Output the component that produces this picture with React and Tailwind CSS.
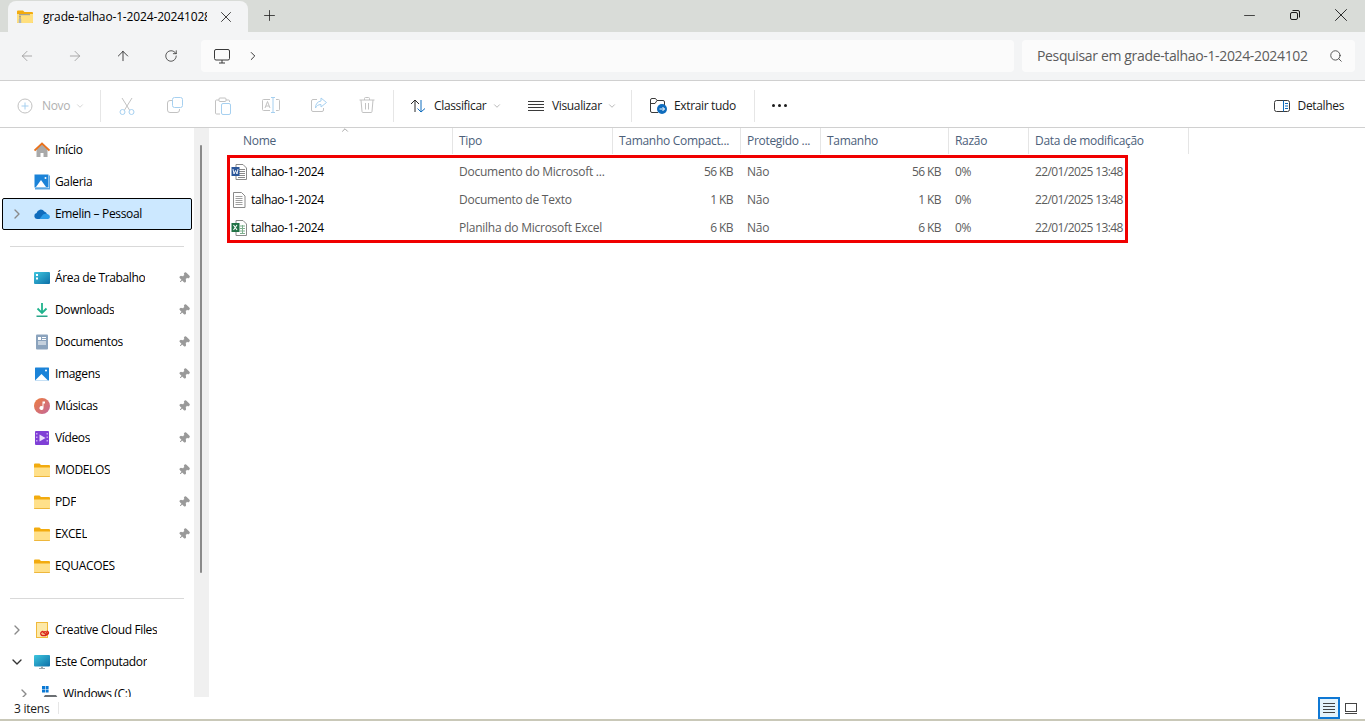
import { ChevronRight, ChevronDown, ChevronUp, Plus, X, Minus, Search, Pin, ArrowLeft, ArrowRight, ArrowUp, RotateCw } from "lucide-react";

/* ---------- drawn icons ---------- */
function FolderIcon() {
  return (
    <svg width="16" height="16" viewBox="0 0 16 16" className="shrink-0">
      <path d="M0 2.500 a1 1 0 0 1 1-1h4.500l1.500 1.500h8a1 1 0 0 1 1 1v9.500a1 1 0 0 1-1 1H1a1 1 0 0 1-1-1z" fill="#f2ab0f" />
      <path d="M0 5.500 h16 v8.500 a1 1 0 0 1-1 1H1 a1 1 0 0 1-1-1z" fill="#ffe08a" />
      <path d="M0 14 h16 v.2 a.9.9 0 0 1-.9.8H.9a.9.9 0 0 1-.9-.8z" fill="#eeb73c" />
    </svg>
  );
}

function HomeIcon() {
  return (
    <svg width="16" height="16" viewBox="0 0 16 16" className="shrink-0">
      <path d="M2.500 7.500 8 2.500l5.500 5V15H9.500v-4h-3v4h-4z" fill="#a9a9a9" />
      <path d="M.5 8.500 8 1.500l7.500 7" fill="none" stroke="#e8711c" strokeWidth="1.900" />
    </svg>
  );
}

function GalleryIcon() {
  return (
    <svg width="16" height="16" viewBox="0 0 16 16" className="shrink-0">
      <rect x="0.500" y="0.500" width="14" height="13" fill="#1b83d8" />
      <path d="M2 13 7 6l5 7z" fill="#fff" />
      <circle cx="11.500" cy="4" r="1" fill="#fff" />
      <path d="M1 14h14V1.500h1V15.500H1z" fill="#5aa7e3" />
    </svg>
  );
}

function CloudIcon() {
  return (
    <svg width="16" height="16" viewBox="0 0 16 16" className="shrink-0">
      <path d="M3 13a3 3 0 0 1-.4-5.900A4.200 4.200 0 0 1 10.300 5.500 3.600 3.600 0 0 1 13 8.200 2.500 2.500 0 0 1 13.500 13z" fill="#0f6cbd" />
      <path d="M5.500 13 9 8.500c1.500-.8 3-.8 4-.3 1.700.1 2.900 1.300 2.900 2.500 0 1.300-1 2.300-2.400 2.300z" fill="#2b9be8" />
    </svg>
  );
}

function DesktopIcon() {
  return (
    <svg width="16" height="16" viewBox="0 0 16 16" className="shrink-0">
      <defs>
        <linearGradient id="desk" x1="0" y1="0" x2="1" y2="1">
          <stop offset="0" stopColor="#3fc6de" />
          <stop offset="1" stopColor="#0c6fa8" />
        </linearGradient>
      </defs>
      <rect x="0" y="2" width="16" height="12" rx="1" fill="url(#desk)" />
      <rect x="2" y="4" width="2" height="2" fill="#fff" />
      <rect x="2" y="7.500" width="2" height="2" fill="#fff" />
    </svg>
  );
}

function DownloadIcon() {
  return (
    <svg width="16" height="16" viewBox="0 0 16 16" className="shrink-0">
      <path d="M8 1v9M3.500 6.500 8 11l4.500-4.500" fill="none" stroke="#20b38d" strokeWidth="1.800" />
      <rect x="2.500" y="13.500" width="11" height="1.500" fill="#2aa58a" />
    </svg>
  );
}

function DocsIcon() {
  return (
    <svg width="16" height="16" viewBox="0 0 16 16" className="shrink-0">
      <rect x="2" y="0.500" width="12" height="15" rx="1" fill="#8ba3bd" />
      <path d="M4 3h3v3H4zM8 3h4v1H8zM8 5h4v1H8zM4 7.500h8v1H4zM4 9.500h8v1H4z" fill="#fff" />
    </svg>
  );
}

function PicturesIcon() {
  return (
    <svg width="16" height="16" viewBox="0 0 16 16" className="shrink-0">
      <rect x="1" y="1.500" width="14" height="13" rx="0.500" fill="#1b83d8" />
      <path d="M1 14.500 7.500 8l6.500 6.500z" fill="#fff" />
      <circle cx="12" cy="4.500" r="1" fill="#fff" />
    </svg>
  );
}

function MusicIcon() {
  return (
    <svg width="16" height="16" viewBox="0 0 16 16" className="shrink-0">
      <defs>
        <linearGradient id="mus" x1="0" y1="0" x2="1" y2="1">
          <stop offset="0" stopColor="#ee7d3b" />
          <stop offset="1" stopColor="#c3679c" />
        </linearGradient>
      </defs>
      <circle cx="8" cy="8" r="8" fill="url(#mus)" />
      <path d="M8.500 3.500h2.500v2H9.500V10a2 2 0 1 1-1-1.700z" fill="#fff" />
    </svg>
  );
}

function VideoIcon() {
  return (
    <svg width="16" height="16" viewBox="0 0 16 16" className="shrink-0">
      <rect x="1" y="1" width="14" height="14" rx="1" fill="#7f3fd6" />
      <path d="M5.500 4.500v7l6-3.500z" fill="#e8ddfa" />
      <path d="M2 3h1.500v1.500H2zM2 6.500h1.500V8H2zM2 10h1.500v1.500H2zM12.500 3H14v1.500h-1.500zM12.500 6.500H14V8h-1.500zM12.500 10H14v1.500h-1.500z" fill="#c9a8f2" />
    </svg>
  );
}

function CreativeCloudIcon() {
  return (
    <svg width="16" height="16" viewBox="0 0 16 16" className="shrink-0">
      <rect x="2.500" y="0.500" width="11" height="15" fill="#fde9a8" stroke="#f0b93a" />
      <path d="M7 11.500a2 2 0 1 1 2.500 2h-3a2 2 0 1 1 .5-4l2.500 2.500a1.700 1.700 0 1 0 1.200-2.800" fill="none" stroke="#d9241b" strokeWidth="1.300" transform="translate(2 0)" />
    </svg>
  );
}

function ComputerIcon() {
  return (
    <svg width="16" height="16" viewBox="0 0 16 16" className="shrink-0">
      <defs>
        <linearGradient id="cmp" x1="0" y1="0" x2="1" y2="1">
          <stop offset="0" stopColor="#3fc6de" />
          <stop offset="1" stopColor="#0c6fa8" />
        </linearGradient>
      </defs>
      <rect x="0" y="1" width="16" height="11.500" rx="1" fill="url(#cmp)" />
      <path d="M7 12.500h2V14h2v1H5v-1h2z" fill="#9aa4ab" />
    </svg>
  );
}

function DriveIcon() {
  return (
    <svg width="16" height="16" viewBox="0 0 16 16" className="shrink-0">
      <path d="M0 0h3v3H0zM3.600 0h3v3h-3zM0 3.600h3v3H0zM3.600 3.600h3v3h-3z" fill="#0a78d4" />
      <path d="M3 9h11l2 3v3H1v-3z" fill="#6b6f73" />
      <rect x="3" y="12.500" width="2" height="1" fill="#5ee05e" />
    </svg>
  );
}

function ZipFolderIcon() {
  return (
    <svg width="16" height="16" viewBox="0 0 16 16" className="shrink-0">
      <path d="M0 2.500a1 1 0 0 1 1-1h5L7.500 3H15a1 1 0 0 1 1 1v9a1 1 0 0 1-1 1H1a1 1 0 0 1-1-1z" fill="#f2ab0f" />
      <path d="M0 5h16v8a1 1 0 0 1-1 1H1a1 1 0 0 1-1-1z" fill="#ffdf7d" />
      <path d="M2 5h11v1.200H2z" fill="#a3a39a" />
      <path d="M2 6.800h2v1H2zM2 8.600h2v1H2z" fill="#8e8e86" />
      <rect x="1.800" y="10" width="2.400" height="4" fill="#a9b4bb" />
    </svg>
  );
}

function WordFile() {
  return (
    <svg width="16" height="16" viewBox="0 0 16 16" className="shrink-0">
      <path d="M5 .5h7l3.500 3.500v11.500H5z" fill="#fff" stroke="#8a8a8a" />
      <path d="M7 5.500h7M7 7.500h7M7 9.500h7M7 11.500h7M7 13.500h7" stroke="#8a8a8a" />
      <rect x="0.500" y="3" width="8" height="9" fill="#2b579a" />
      <path d="M2 5l1 5 1.500-3.500L6 10l1-5" fill="none" stroke="#fff" strokeWidth="0.900" />
    </svg>
  );
}

function TextFile() {
  return (
    <svg width="16" height="16" viewBox="0 0 16 16" className="shrink-0">
      <path d="M2.500.5h8l3.500 3.500v11.500H2.500z" fill="#fff" stroke="#8a8a8a" />
      <path d="M4.500 4.500h7M4.500 6.500h7M4.500 8.500h7M4.500 10.500h7M4.500 12.500h7" stroke="#a0a0a0" />
    </svg>
  );
}

function ExcelFile() {
  return (
    <svg width="16" height="16" viewBox="0 0 16 16" className="shrink-0">
      <path d="M5 .5h7l3.500 3.500v11.500H5z" fill="#fff" stroke="#8a8a8a" />
      <path d="M9 6h5M9 8.500h5M9 11h5M9 13.500h5M11.500 5v9" stroke="#7fb08f" />
      <rect x="0.500" y="3" width="8" height="9" fill="#217346" />
      <path d="M2.500 5l3.500 5M6 5l-3.500 5" fill="none" stroke="#fff" strokeWidth="1.100" />
    </svg>
  );
}

/* ---------- toolbar glyphs, thin strokes ---------- */
const BLUE = "#a6d0f0";
const GREY = "#c2c2c2";

function NewIcon() {
  return (
    <svg width="16" height="16" viewBox="0 0 16 16" fill="none" className="shrink-0">
      <circle cx="8" cy="8" r="7" stroke={GREY} />
      <path d="M8 4.500v7M4.500 8h7" stroke={BLUE} />
    </svg>
  );
}

function CutIcon() {
  return (
    <svg width="16" height="18" viewBox="0 0 16 18" fill="none">
      <path d="M3 1l7.500 12M13 1L5.500 13" stroke={GREY} />
      <circle cx="3.500" cy="15" r="2.500" stroke={BLUE} />
      <circle cx="12.500" cy="15" r="2.500" stroke={BLUE} />
    </svg>
  );
}

function CopyIcon() {
  return (
    <svg width="16" height="16" viewBox="0 0 16 16" fill="none">
      <rect x="5.500" y="0.500" width="10" height="10" rx="2" stroke={BLUE} />
      <path d="M5 3.500H3a2.500 2.500 0 0 0-2.500 2.500v7A2.500 2.500 0 0 0 3 15.500h7a2.500 2.500 0 0 0 2.500-2.500v-1" stroke={GREY} />
    </svg>
  );
}

function PasteIcon() {
  return (
    <svg width="16" height="18" viewBox="0 0 16 18" fill="none">
      <path d="M4 3H1.500a1 1 0 0 0-1 1v12a1 1 0 0 0 1 1H5M11 3h2.500a1 1 0 0 1 1 1v1" stroke={GREY} />
      <rect x="4" y="1" width="7" height="3.500" rx="1" stroke={GREY} />
      <rect x="6.500" y="6.500" width="9" height="11" rx="1.500" stroke={BLUE} />
    </svg>
  );
}

function RenameIcon() {
  return (
    <svg width="18" height="16" viewBox="0 0 18 16" fill="none">
      <path d="M8 2.500H1.500a1 1 0 0 0-1 1v9a1 1 0 0 0 1 1H8M14 2.500h2.500a1 1 0 0 1 1 1v9a1 1 0 0 1-1 1H14" stroke={GREY} />
      <path d="M11 .5v15M9 .5h4M9 15.500h4" stroke={BLUE} />
      <path d="M3 11l2.500-6.500L8 11M4 9h3" stroke={GREY} />
    </svg>
  );
}

function ShareIcon() {
  return (
    <svg width="16" height="16" viewBox="0 0 16 16" fill="none">
      <path d="M6 2.500H2a1.500 1.500 0 0 0-1.500 1.500v9A1.500 1.500 0 0 0 2 14.500h9a1.500 1.500 0 0 0 1.500-1.500v-2" stroke={GREY} />
      <path d="M10 1l5.500 4.500L10 10V7.500C7 7.500 5.500 9 4.500 11c0-4 2-6.500 5.500-7z" stroke={BLUE} />
    </svg>
  );
}

function TrashIcon() {
  return (
    <svg width="16" height="16" viewBox="0 0 16 16" fill="none">
      <path d="M.5 3h15M5.500 3V1.500a1 1 0 0 1 1-1h3a1 1 0 0 1 1 1V3M2 3l1 11.500a1 1 0 0 0 1 1h8a1 1 0 0 0 1-1L14 3M6.500 6v6.500M9.500 6v6.500" stroke={GREY} />
    </svg>
  );
}

function SortIcon() {
  return (
    <svg width="16" height="16" viewBox="0 0 16 16" fill="none" className="shrink-0">
      <path d="M5 14V2M1 6l4-4 4 4" stroke="#2b2b2b" />
      <path d="M11 2v12M7.500 10.500 11 14l4-3.500" stroke="#0f6cbd" />
    </svg>
  );
}

function ViewIcon() {
  return (
    <svg width="16" height="16" viewBox="0 0 16 16" fill="none" className="shrink-0">
      <path d="M0 3.500h16M0 6.500h16M0 9.500h16M0 12.500h16" stroke="#3a3a3a" />
    </svg>
  );
}

function ExtractIcon() {
  return (
    <svg width="17" height="16" viewBox="0 0 17 16" fill="none" className="shrink-0">
      <path d="M8 14.500H2a1.500 1.500 0 0 1-1.500-1.500V2A1.500 1.500 0 0 1 2 .5h3.500L7 2.500h6A1.500 1.500 0 0 1 14.500 4v3M.5 5.500H5l2-3" stroke="#3a3a3a" />
      <circle cx="12" cy="11" r="5" fill="#0f6cbd" />
      <path d="M9.500 11h5M12.500 9l2 2-2 2" stroke="#fff" />
    </svg>
  );
}

function DetailsIcon() {
  return (
    <svg width="16" height="14" viewBox="0 0 16 14" fill="none" className="shrink-0">
      <rect x="0.500" y="1.500" width="15" height="11" rx="2" stroke="#3a3a3a" />
      <path d="M9.500 1.500v11" stroke="#0f6cbd" />
      <path d="M11 4.500h3M11 7h3M11 9.500h3" stroke="#0f6cbd" />
    </svg>
  );
}

function MonitorIcon() {
  return (
    <svg width="16" height="16" viewBox="0 0 16 16" fill="none" className="shrink-0">
      <rect x="0.500" y="1.500" width="15" height="10.500" rx="1.500" stroke="#3a3a3a" />
      <path d="M8 12v3M5 15h6" stroke="#3a3a3a" />
    </svg>
  );
}

function RestoreIcon() {
  return (
    <svg width="10" height="10" viewBox="0 0 10 10" fill="none">
      <rect x="0.500" y="2.500" width="7" height="7" rx="1.500" stroke="#1b1b1b" />
      <path d="M2.500 .5H8a1.500 1.500 0 0 1 1.500 1.500v5.500" stroke="#1b1b1b" />
    </svg>
  );
}

const PLACES = [
  { label: "Área de Trabalho", Icon: DesktopIcon, pin: true },
  { label: "Downloads", Icon: DownloadIcon, pin: true },
  { label: "Documentos", Icon: DocsIcon, pin: true },
  { label: "Imagens", Icon: PicturesIcon, pin: true },
  { label: "Músicas", Icon: MusicIcon, pin: true },
  { label: "Vídeos", Icon: VideoIcon, pin: true },
  { label: "MODELOS", Icon: FolderIcon, pin: true },
  { label: "PDF", Icon: FolderIcon, pin: true },
  { label: "EXCEL", Icon: FolderIcon, pin: true },
  { label: "EQUACOES", Icon: FolderIcon },
];

const FILES = [
  { Icon: WordFile, type: "Documento do Microsoft ...", packed: "56 KB", size: "56 KB" },
  { Icon: TextFile, type: "Documento de Texto", packed: "1 KB", size: "1 KB" },
  { Icon: ExcelFile, type: "Planilha do Microsoft Excel", packed: "6 KB", size: "6 KB" },
];

const HEADERS = [
  { label: "Tipo", width: "w-[160px]" },
  { label: "Tamanho Compact...", width: "w-[128px]" },
  { label: "Protegido ...", width: "w-[80px]" },
  { label: "Tamanho", width: "w-[128px]" },
  { label: "Razão", width: "w-[80px]" },
  { label: "Data de modificação", width: "w-[160px]" },
];

function SideRow({ label, Icon, pin, arrow, selected, indent }) {
  return (
    <div
      className={`mx-[2px] flex h-[32px] items-center ${
        selected ? "rounded-[2px] border border-black bg-[#cce8ff]" : ""
      }`}
    >
      <span className={`flex w-[30px] shrink-0 items-center text-[#8a8a8a] ${indent ? "pl-[14px]" : selected ? "pl-[6px]" : "pl-[7px]"}`}>
        {arrow === "right" && <ChevronRight size={16} strokeWidth={2} />}
        {arrow === "down" && <ChevronDown size={16} strokeWidth={2} className="text-[#333]" />}
      </span>
      <span className={indent ? "ml-[10px]" : selected ? "ml-[1px]" : "ml-[2px]"}>
        <Icon />
      </span>
      <span className="ml-[5px] truncate text-black">{label}</span>
      {pin && <Pin size={12} strokeWidth={2} fill="#9a9a9a" className="ml-auto mr-[2px] rotate-45 text-[#9a9a9a]" />}
    </div>
  );
}

function Separator() {
  return <span className="h-[32px] w-px shrink-0 bg-[#e6e6e6]" />;
}

export default function App() {
  return (
    <div className="relative flex h-screen w-screen flex-col overflow-hidden bg-white font-['Open_Sans',sans-serif] text-[12px] tracking-[-0.25px] text-[#1b1b1b]">
      {/* title bar */}
      <div className="flex h-[32px] shrink-0 bg-[#d9dcd8] pt-px">
        <div className="ml-[8px] flex w-[240px] items-center rounded-t-[8px] bg-[#f3f4f5] pl-[9px]">
          <ZipFolderIcon />
          <span className="ml-[10px] w-[164px] overflow-hidden whitespace-nowrap tracking-[-0.15px] text-black">grade-talhao-1-2024-20241028</span>
          <X size={18} strokeWidth={1.1} className="ml-[10px]" />
        </div>
        <Plus size={17} strokeWidth={1.1} className="ml-[13px] mt-[6px]" />
        <div className="ml-auto flex items-center pb-[3px]">
          <Minus size={17} strokeWidth={1.1} className="mr-[32px]" />
          <RestoreIcon />
          <X size={22} strokeWidth={1} className="ml-[30px] mr-[13px]" />
        </div>
      </div>

      {/* address bar */}
      <div className="flex h-[49px] shrink-0 items-center border-b border-[#d0d0d0] bg-[#f3f4f5] pb-px pl-[19px]">
        <ArrowLeft size={16} strokeWidth={1.25} className="text-[#9a9a9a]" />
        <ArrowRight size={16} strokeWidth={1.25} className="ml-[32px] text-[#9a9a9a]" />
        <ArrowUp size={16} strokeWidth={1.25} className="ml-[32px] text-[#222]" />
        <RotateCw size={14} strokeWidth={1.25} className="ml-[33px] text-[#222]" />
        <div className="ml-[23px] flex h-[32px] w-[813px] items-center rounded-[4px] bg-[#fbfbfb] pl-[13px]">
          <MonitorIcon />
          <ChevronRight size={14} strokeWidth={1.5} className="ml-[16px]" />
        </div>
        <div className="ml-[8px] flex h-[32px] w-[333px] items-center rounded-[4px] bg-[#fbfbfb] pl-[15px] text-[#5c5c5c]">
          <span className="w-[272px] whitespace-nowrap text-[14px] tracking-[-0.35px]">Pesquisar em grade-talhao-1-2024-2024102</span>
          <Search size={14} strokeWidth={1.5} className="ml-[20px] text-[#444]" />
        </div>
      </div>

      {/* toolbar */}
      <div className="flex h-[47px] shrink-0 items-center border-b border-[#d0d0d0] pl-[17px] pt-[3px] tracking-[-0.35px]">
        <div className="flex w-[83px] items-center text-[#b0b0b0]">
          <NewIcon />
          <span className="ml-[9px]">Novo</span>
          <ChevronDown size={10} strokeWidth={1.25} className="ml-[5px]" />
        </div>
        <Separator />
        <div className="ml-[2px] flex">
          {[CutIcon, CopyIcon, PasteIcon, RenameIcon, ShareIcon, TrashIcon].map((Icon, i) => (
            <span key={i} className="flex w-[48px] justify-center">
              <Icon />
            </span>
          ))}
        </div>
        <span className="ml-[2px]" />
        <Separator />
        <div className="ml-[16px] flex w-[116px] items-center">
          <SortIcon />
          <span className="ml-[8px]">Classificar</span>
          <ChevronDown size={10} strokeWidth={1.25} className="ml-[6px] text-[#777]" />
        </div>
        <div className="ml-[2px] flex w-[103px] items-center">
          <ViewIcon />
          <span className="ml-[8px]">Visualizar</span>
          <ChevronDown size={10} strokeWidth={1.25} className="ml-[5px] text-[#777]" />
        </div>
        <Separator />
        <div className="ml-[18px] flex w-[104px] items-center">
          <ExtractIcon />
          <span className="ml-[7px]">Extrair tudo</span>
        </div>
        <Separator />
        <div className="ml-[17px] flex gap-[3px]">
          <span className="h-[3px] w-[3px] rounded-full bg-[#1b1b1b]" />
          <span className="h-[3px] w-[3px] rounded-full bg-[#1b1b1b]" />
          <span className="h-[3px] w-[3px] rounded-full bg-[#1b1b1b]" />
        </div>
        <div className="ml-auto mr-[21px] flex items-center">
          <DetailsIcon />
          <span className="ml-[8px]">Detalhes</span>
        </div>
      </div>

      {/* body */}
      <div className="flex min-h-0 flex-1">
        <aside className="w-[194px] shrink-0 overflow-hidden pt-[6px] tracking-[-0.35px]">
          <SideRow label="Início" Icon={HomeIcon} />
          <SideRow label="Galeria" Icon={GalleryIcon} />
          <SideRow label="Emelin – Pessoal" Icon={CloudIcon} arrow="right" selected />
          <div className="flex h-[32px] items-center px-[10px]">
            <span className="h-px w-full bg-[#d9d9d9]" />
          </div>
          {PLACES.map((p) => (
            <SideRow key={p.label} {...p} />
          ))}
          <div className="flex h-[32px] items-center px-[10px]">
            <span className="h-px w-full bg-[#d9d9d9]" />
          </div>
          <SideRow label="Creative Cloud Files" Icon={CreativeCloudIcon} arrow="right" />
          <SideRow label="Este Computador" Icon={ComputerIcon} arrow="down" />
          <SideRow label="Windows (C:)" Icon={DriveIcon} arrow="right" indent />
        </aside>

        {/* scrollbar */}
        <div className="w-[15px] shrink-0 bg-[#f0f0f0] pl-[6px] pt-[17px]">
          <div className="h-[428px] w-[2px] rounded-full bg-[#8a8a8a]" />
        </div>

        {/* file list */}
        <main className="relative min-w-0 flex-1">
          <div className="flex h-[26px] tracking-[-0.3px] text-[#4c607a]">
            <div className="flex w-[244px] items-center border-r border-[#e5e5e5] pl-[34px]">Nome</div>
            {HEADERS.map((h) => (
              <div key={h.label} className={`flex ${h.width} items-center overflow-hidden whitespace-nowrap border-r border-[#e5e5e5] pl-[6px]`}>
                {h.label}
              </div>
            ))}
          </div>
          <ChevronUp size={10} strokeWidth={1.25} className="absolute left-[131px] top-[-3px] text-[#555]" />
          <div className="pt-[4px]">
            {FILES.map((f, i) => (
              <div key={i} className="flex h-[28px] items-center text-[#5c5c5c]">
                <div className="flex w-[244px] items-center pl-[22px] tracking-[-0.35px] text-black">
                  <f.Icon />
                  <span className="ml-[4px]">talhao-1-2024</span>
                </div>
                <div className="w-[160px] overflow-hidden whitespace-nowrap pl-[6px]">{f.type}</div>
                <div className="w-[128px] pr-[8px] text-right tracking-[-0.6px]">{f.packed}</div>
                <div className="w-[80px] pl-[6px]">Não</div>
                <div className="w-[128px] pr-[8px] text-right tracking-[-0.6px]">{f.size}</div>
                <div className="w-[80px] pl-[6px]">0%</div>
                <div className="w-[160px] pl-[6px] tracking-[-0.6px]">22/01/2025 13:48</div>
              </div>
            ))}
          </div>
          {/* red annotation drawn over the list */}
          <div className="pointer-events-none absolute left-[18px] top-[27px] h-[88px] w-[901px] border-[3px] border-[#f00000]" />
        </main>
      </div>

      {/* status bar */}
      <div className="flex h-[24px] shrink-0 items-center border-b-2 border-[#c9c8b8] pl-[14px]">
        <span className="mt-[2px]">3 itens</span>
        <span className="ml-[9px] h-[12px] w-px bg-[#e6e6e6]" />
        <div className="ml-auto mr-[8px] flex items-center">
          <span className="flex h-[22px] w-[22px] flex-col items-center justify-center gap-[2px] border-2 border-[#0f78d4] bg-[#e5f3fb]">
            <span className="h-px w-[12px] bg-[#444]" />
            <span className="h-px w-[12px] bg-[#444]" />
            <span className="h-px w-[12px] bg-[#444]" />
            <span className="h-px w-[12px] bg-[#444]" />
          </span>
          <span className="ml-[5px] flex w-[12px] flex-col gap-[1px]">
            <span className="h-[9px] border border-[#444]" />
            <span className="h-px bg-[#444]" />
          </span>
        </div>
      </div>
    </div>
  );
}
